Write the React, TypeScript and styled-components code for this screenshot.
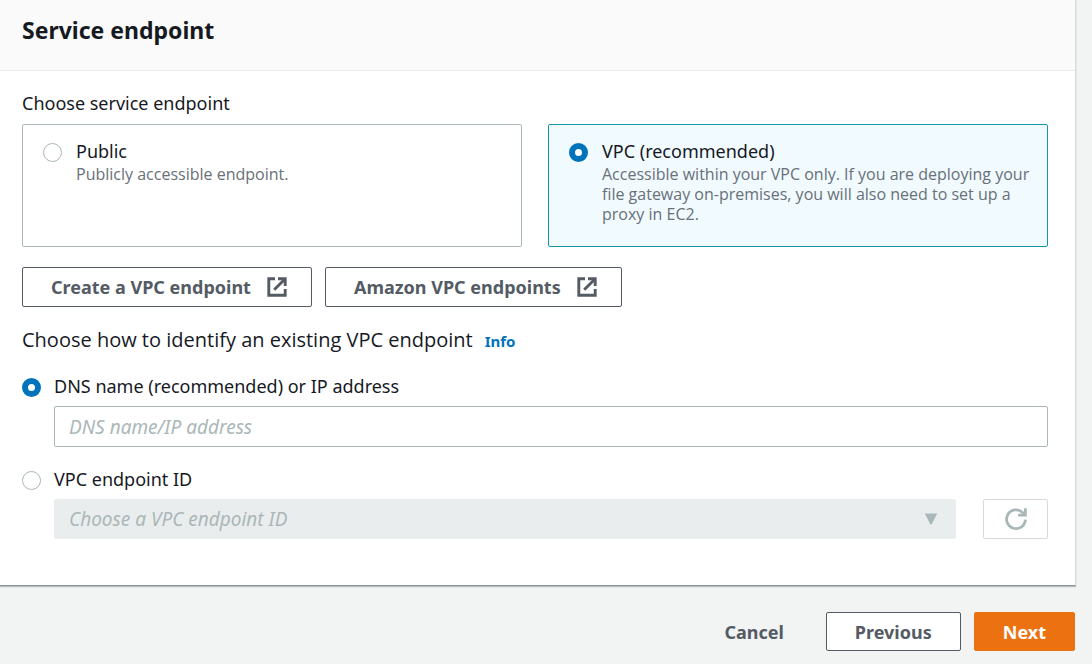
import React, { useState } from "react";
import styled, { createGlobalStyle } from "styled-components";

const GlobalStyle = createGlobalStyle`
  *, *::before, *::after { box-sizing: border-box; }
  html { background: #f2f3f3; }
  body {
    margin: 0;
    background: #f2f3f3;
    color: #16191f;
    font-family: "Noto Sans", "Open Sans", sans-serif;
    font-size: 18px;
    line-height: 24px;
  }
  button, input, select { font: inherit; }
`;

const Page = styled.main`
  padding-right: 16px;
`;

const Panel = styled.section`
  background: #ffffff;
  border-right: 1px solid #d5dbdb;
  border-bottom: 1px solid #879596;
  box-shadow: 0 1px 1px rgba(0, 28, 36, 0.25);
`;

const PanelHeader = styled.header`
  padding: 15px 28px 25px 22px;
  background: #fafafa;
  border-bottom: 1px solid #eaeded;
`;

const Title = styled.h2`
  margin: 0;
  font-size: 23px;
  line-height: 30px;
  font-weight: 700;
`;

const PanelBody = styled.div`
  padding: 20px 27px 46px 22px;
`;

const Group = styled.fieldset`
  margin: 0;
  padding: 0;
  border: 0;
  min-width: 0;
`;

const Legend = styled.legend`
  padding: 0;
  margin-bottom: 9px;
`;

const LegendWide = styled(Legend)`
  display: flex;
  align-items: baseline;
  gap: 12px;
  margin-bottom: 19px;
  font-family: "Open Sans", "Noto Sans", sans-serif;
  font-size: 20px;
  line-height: 28px;
`;

const Tiles = styled.div`
  display: grid;
  grid-template-columns: 1fr 1fr;
  gap: 26px;
`;

const Tile = styled.label<{ $selected: boolean }>`
  display: flex;
  align-items: flex-start;
  gap: 14px;
  min-height: 123px;
  padding: 14px 12px 14px 20px;
  border: 1px solid ${(p) => (p.$selected ? "#1795a8" : "#aab7b8")};
  border-radius: 2px;
  background: ${(p) => (p.$selected ? "#f1faff" : "#ffffff")};
`;

const TileText = styled.span`
  display: flex;
  flex-direction: column;
  gap: 1px;
`;

const TileDescription = styled.span`
  color: #687078;
  font-family: "Open Sans", "Noto Sans", sans-serif;
  font-size: 16px;
  line-height: 20px;
`;

const Radio = styled.input.attrs({ type: "radio" })`
  appearance: none;
  flex: none;
  width: 19px;
  height: 19px;
  margin: 4px 0 0;
  border: 1px solid #aab7b8;
  border-radius: 50%;
  background: #ffffff;

  &:checked {
    border: 6px solid #0073bb;
  }
`;

const ButtonRow = styled.div`
  display: flex;
  gap: 13px;
  margin: 20px 0 19px;
`;

const Button = styled.button<{ $variant?: "normal" | "primary" | "link" }>`
  display: inline-flex;
  align-items: center;
  justify-content: center;
  gap: 16px;
  height: 40px;
  padding: 0 28px;
  border: 1px solid
    ${(p) => (p.$variant === "primary" ? "#ec7211" : p.$variant === "link" ? "transparent" : "#545b64")};
  border-radius: 2px;
  background: ${(p) => (p.$variant === "primary" ? "#ec7211" : p.$variant === "link" ? "transparent" : "#ffffff")};
  color: ${(p) => (p.$variant === "primary" ? "#ffffff" : "#545b64")};
  font-size: 18px;
  font-weight: 700;
  white-space: nowrap;
`;

const LinkButton = styled(Button)`
  padding: 0 24px 0 28px;
`;

const FooterButton = styled(Button)`
  height: 39px;
`;

const RefreshButton = styled(Button)`
  flex: none;
  width: 65px;
  padding: 0;
  border-color: #d5dbdb;
  color: #aab7b8;
`;

const InfoLink = styled.a`
  color: #0073bb;
  font-family: "Noto Sans", "Open Sans", sans-serif;
  font-size: 15px;
  font-weight: 700;
  text-decoration: none;
`;

const Option = styled.div`
  display: flex;
  flex-direction: column;
  gap: 8px;

  & + & {
    margin-top: 20px;
  }
`;

const OptionLabel = styled.label`
  display: flex;
  align-items: flex-start;
  gap: 13px;
`;

const ControlRow = styled.div`
  display: flex;
  gap: 27px;
  padding-left: 32px;
`;

const TextInput = styled.input`
  flex: 1;
  min-width: 0;
  height: 41px;
  padding: 0 14px;
  border: 1px solid #aab7b8;
  border-radius: 2px;
  background: #ffffff;
  color: #16191f;
  font-size: 19px;

  &::placeholder {
    color: #aab7b8;
    font-style: italic;
    opacity: 1;
  }
`;

const SelectBox = styled.div`
  position: relative;
  flex: 1;
  min-width: 0;
`;

const Select = styled.select`
  appearance: none;
  display: block;
  width: 100%;
  height: 40px;
  padding: 0 48px 0 15px;
  border: 0;
  border-radius: 2px;
  background: #eaeded;
  color: #aab7b8;
  font-size: 19px;
  font-style: italic;
  opacity: 1;
`;

const Caret = styled.svg`
  position: absolute;
  top: 14px;
  right: 18px;
  pointer-events: none;
`;

const Footer = styled.footer`
  display: flex;
  justify-content: flex-end;
  gap: 13px;
  padding: 26px 1px 13px 22px;
`;

const ExternalIcon = () => (
  <svg width="20" height="20" viewBox="0 0 20 20" fill="none" stroke="currentColor" strokeWidth="2.9" aria-hidden="true">
    <path d="M8 1.8H1.8v16.4h16.4V12" />
    <path d="M11 1.8h7.2V9" />
    <path d="M18 2 7.2 12.8" />
  </svg>
);

const RefreshIcon = () => (
  <svg width="24" height="24" viewBox="0 0 24 24" fill="none" stroke="currentColor" strokeWidth="2.8" aria-hidden="true">
    <path d="M21.4 12.6a9.4 9.4 0 1 1-2.9-7.2l1.9 2" />
    <path d="M21.4 1.2v7h-7.3" />
  </svg>
);

type Endpoint = "public" | "vpc";
type Identify = "dns" | "id";

export default function App() {
  const [endpoint, setEndpoint] = useState<Endpoint>("vpc");
  const [identify, setIdentify] = useState<Identify>("dns");

  return (
    <>
      <GlobalStyle />
      <Page>
        <Panel>
          <PanelHeader>
            <Title>Service endpoint</Title>
          </PanelHeader>
          <PanelBody>
            <Group>
              <Legend>Choose service endpoint</Legend>
              <Tiles>
                <Tile $selected={endpoint === "public"}>
                  <Radio name="endpoint" checked={endpoint === "public"} onChange={() => setEndpoint("public")} />
                  <TileText>
                    <span>Public</span>
                    <TileDescription>Publicly accessible endpoint.</TileDescription>
                  </TileText>
                </Tile>
                <Tile $selected={endpoint === "vpc"}>
                  <Radio name="endpoint" checked={endpoint === "vpc"} onChange={() => setEndpoint("vpc")} />
                  <TileText>
                    <span>VPC (recommended)</span>
                    <TileDescription>
                      Accessible within your VPC only. If you are deploying your file gateway on-premises, you will
                      also need to set up a proxy in EC2.
                    </TileDescription>
                  </TileText>
                </Tile>
              </Tiles>
            </Group>

            <ButtonRow>
              <LinkButton type="button">
                Create a VPC endpoint
                <ExternalIcon />
              </LinkButton>
              <LinkButton type="button">
                Amazon VPC endpoints
                <ExternalIcon />
              </LinkButton>
            </ButtonRow>

            <Group>
              <LegendWide>
                Choose how to identify an existing VPC endpoint
                <InfoLink href="#info">Info</InfoLink>
              </LegendWide>
              <Option>
                <OptionLabel>
                  <Radio name="identify" checked={identify === "dns"} onChange={() => setIdentify("dns")} />
                  DNS name (recommended) or IP address
                </OptionLabel>
                <ControlRow>
                  <TextInput
                    type="text"
                    aria-label="DNS name or IP address"
                    placeholder="DNS name/IP address"
                    disabled={identify !== "dns"}
                  />
                </ControlRow>
              </Option>
              <Option>
                <OptionLabel>
                  <Radio name="identify" checked={identify === "id"} onChange={() => setIdentify("id")} />
                  VPC endpoint ID
                </OptionLabel>
                <ControlRow>
                  <SelectBox>
                    <Select aria-label="VPC endpoint ID" disabled={identify !== "id"}>
                      <option>Choose a VPC endpoint ID</option>
                    </Select>
                    <Caret width="14" height="12" viewBox="0 0 14 12" aria-hidden="true">
                      <path d="M.8.5h12.4L7.8 11q-.8 1-1.6 0Z" fill="#aab7b8" />
                    </Caret>
                  </SelectBox>
                  <RefreshButton type="button" aria-label="Refresh" disabled={identify !== "id"}>
                    <RefreshIcon />
                  </RefreshButton>
                </ControlRow>
              </Option>
            </Group>
          </PanelBody>
        </Panel>
        <Footer>
          <FooterButton type="button" $variant="link">
            Cancel
          </FooterButton>
          <FooterButton type="button">Previous</FooterButton>
          <FooterButton type="button" $variant="primary">
            Next
          </FooterButton>
        </Footer>
      </Page>
    </>
  );
}
